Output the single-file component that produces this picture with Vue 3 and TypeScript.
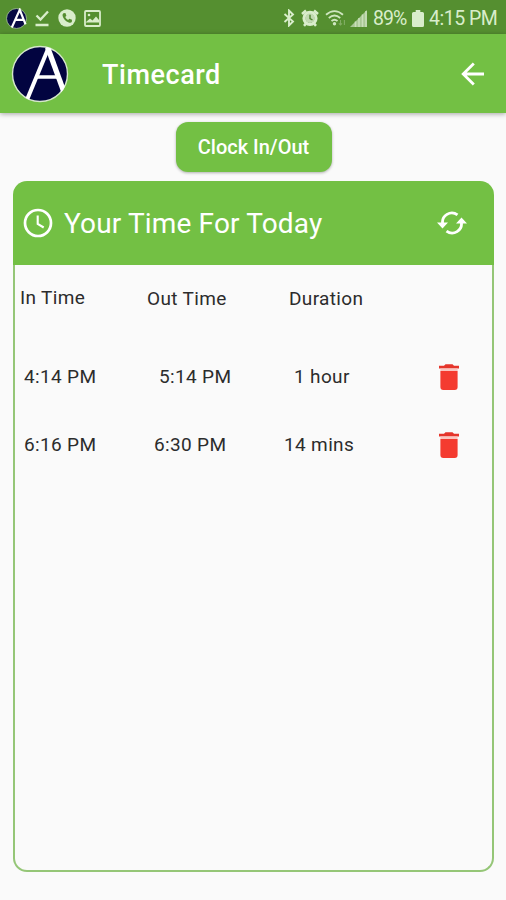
<script setup lang="ts">
interface Entry {
  id: string
  start: string
  end: string
  duration: string
}

const entries: Entry[] = [
  { id: 'first', start: '4:14 PM', end: '5:14 PM', duration: '1 hour' },
  { id: 'second', start: '6:16 PM', end: '6:30 PM', duration: '14 mins' },
]
</script>

<template>
  <div class="screen">
    <div class="status">
      <svg class="s-logo" viewBox="0 0 58 58">
        <circle cx="29" cy="29" r="27.5" fill="#070a43" stroke="#b9d3a8" stroke-width="2" />
        <path d="M16 54L38 5L54 45M25 33H49" fill="none" stroke="#fff" stroke-width="6" />
      </svg>
      <svg class="s-check" viewBox="0 0 16 18">
        <path d="M2.5 6.5L6.5 10.5L14 2.5M1.5 16H14.5" fill="none" stroke="#d9edcb" stroke-width="2.3" />
      </svg>
      <svg class="s-phone" viewBox="0 0 18 18">
        <circle cx="9" cy="9" r="8.7" fill="#d9edcb" />
        <path d="M5.4 4.2L7.4 4L8.4 6.8L7.2 7.9Q8.1 9.9 10.1 10.9L11.3 9.7L14 10.8L13.8 12.9Q12.7 14.1 10.8 13.4Q6 11.8 4.6 7Q4.2 5.2 5.4 4.2Z" fill="#558d30" />
      </svg>
      <svg class="s-photo" viewBox="0 0 17 17">
        <rect x="1" y="1" width="15" height="15" rx="1" fill="none" stroke="#d9edcb" stroke-width="1.8" />
        <path d="M2 12L6 8.5L8.5 10.5L12 6.5L15 10V12.5H2Z" fill="#d9edcb" />
        <circle cx="5" cy="5" r="1.3" fill="#d9edcb" />
      </svg>
      <span class="spacer"></span>
      <svg class="s-bt" viewBox="0 0 12 18">
        <path d="M1.5 5L10 12.5L6 16.5V1.5L10 5.5L1.5 13" fill="none" stroke="#d9edcb" stroke-width="1.9" />
      </svg>
      <svg class="s-alarm" viewBox="0 0 18 18">
        <circle cx="9" cy="9.3" r="6" fill="none" stroke="#d9edcb" stroke-width="3.2" />
        <path d="M1 5L5 1.6M17 5L13 1.6M3 16.8L5 14.5M15 16.8L13 14.5" stroke="#d9edcb" stroke-width="2.6" />
        <circle cx="9" cy="9.3" r="4.7" fill="#c2dab2" />
        <path d="M9 5.8V9.5L11.5 11" fill="none" stroke="#4d842c" stroke-width="1.4" />
      </svg>
      <svg class="s-wifi" viewBox="0 0 22 18">
        <path d="M1 5.7Q9.5 -1.5 18 5.7M3.8 9Q9.5 4 15.2 9M6.5 12Q9.5 9.4 12.5 12" fill="none" stroke="#cfe6c0" stroke-width="1.8" />
        <circle cx="9.5" cy="14.8" r="1.7" fill="#cfe6c0" />
        <path d="M15.5 11V16M13.8 14.3L15.5 16L17 14.3M19.4 16V11" fill="none" stroke="#82ad65" stroke-width="1.1" />
      </svg>
      <svg class="s-signal" viewBox="0 0 17 17">
        <path d="M0 17L17 0V17Z" fill="#a9c895" />
        <path d="M5.5 11.5V17M9 8V17M12.5 4.5V17M16 1V17" stroke="#c9dfba" stroke-width="1.5" />
      </svg>
      <span class="pct">89%</span>
      <svg class="s-bat" viewBox="0 0 12 17">
        <path d="M3.7 0H8.3V2H10.5Q12 2 12 3.5V15.5Q12 17 10.5 17H1.5Q0 17 0 15.5V3.5Q0 2 1.5 2H3.7Z" fill="#d9edcb" />
      </svg>
      <span class="clock">4:15 PM</span>
    </div>

    <header class="bar">
      <svg class="logo" viewBox="0 0 58 58">
        <defs><clipPath id="disc"><circle cx="29" cy="29" r="28" /></clipPath></defs>
        <circle cx="29" cy="29" r="27.5" fill="#020440" stroke="#d5e7cb" stroke-width="1.4" />
        <g clip-path="url(#disc)" fill="none" stroke="#fff">
          <path d="M15.5 56L37 4" stroke-width="4" />
          <path d="M36.5 2L53.3 48" stroke-width="5.2" />
          <path d="M25 32H47" stroke-width="3.4" />
        </g>
      </svg>
      <h1>Timecard</h1>
      <svg class="back" viewBox="0 0 24 24">
        <path d="M12.8 1.4L2.2 12L12.8 22.6M2.2 12H23" fill="none" stroke="#fff" stroke-width="2.8" />
      </svg>
    </header>

    <main>
      <button class="punch" type="button">Clock In/Out</button>
      <section class="card">
        <div class="head">
          <svg class="dial" viewBox="0 0 30 30">
            <circle cx="15" cy="15" r="13" fill="none" stroke="#fff" stroke-width="2.7" />
            <path d="M14.7 7.5V15.8L20.7 19.5" fill="none" stroke="#fff" stroke-width="2.1" />
          </svg>
          <h2>Your Time For Today</h2>
          <svg class="sync" viewBox="0 0 30 24">
            <path d="M5.7 13A9.3 9.3 0 0 1 20.5 3.9M24.3 11A9.3 9.3 0 0 1 9.5 20.1" fill="none" stroke="#fff" stroke-width="2.8" />
            <path d="M0 11.6H11L5.5 17.4ZM30 12.4H19L24.5 6.6Z" fill="#fff" />
          </svg>
        </div>
        <div class="sheet">
          <div class="row titles">
            <span class="in">In Time</span>
            <span class="out">Out Time</span>
            <span class="dur">Duration</span>
          </div>
          <div v-for="entry in entries" :key="entry.id" class="row" :class="entry.id">
            <span class="in">{{ entry.start }}</span>
            <span class="out">{{ entry.end }}</span>
            <span class="dur">{{ entry.duration }}</span>
            <svg class="trash" viewBox="0 0 20 26">
              <path d="M1.4 7H18.6V23Q18.6 26 15.6 26H4.4Q1.4 26 1.4 23Z" fill="#f43b30" />
              <path d="M0 1.8H5L6.5 0.3H13.5L15 1.8H20V4.5H0Z" fill="#e5352b" />
              <path d="M1.4 4.5H18.6V7H1.4Z" fill="#fbc5bf" />
            </svg>
          </div>
        </div>
      </section>
    </main>
  </div>
</template>

<style>
body {
  margin: 0;
  background: #fafafa;
}
</style>

<style scoped>
.screen {
  display: flex;
  flex-direction: column;
  box-sizing: border-box;
  width: 506px;
  height: 900px;
  background: #fafafa;
  color: #2c2c2c;
  font-family: Roboto, "Liberation Sans", sans-serif;
}
svg {
  display: block;
  flex: none;
}
.status {
  display: flex;
  align-items: center;
  box-sizing: border-box;
  height: 34px;
  padding: 2px 9px 0 6px;
  background: #558f30;
  color: #d9edcb;
  font-size: 19.5px;
  white-space: nowrap;
}
.spacer { flex: 1; }
.s-logo { width: 21px; height: 21px; }
.s-check { width: 16px; height: 18px; margin-left: 7px; }
.s-phone { width: 18px; height: 18px; margin-left: 8px; }
.s-photo { width: 17px; height: 17px; margin-left: 8px; }
.s-bt { width: 12px; height: 18px; }
.s-alarm { width: 18px; height: 18px; margin-left: 6px; }
.s-wifi { width: 22px; height: 18px; margin-left: 6px; }
.s-signal { width: 17px; height: 17px; margin-left: 3px; }
.pct { width: 34px; margin-left: 6px; letter-spacing: -1px; }
.s-bat { width: 12px; height: 17px; margin-left: 5px; }
.clock { width: 68px; margin-left: 5px; letter-spacing: -0.5px; }
.bar {
  display: flex;
  align-items: center;
  box-sizing: border-box;
  height: 79px;
  padding: 0 21px 0 11px;
  background: #73c044;
  box-shadow: 0 1px 5px rgba(0, 0, 0, 0.35);
}
.logo { width: 58px; height: 58px; }
h1 {
  flex: 1;
  margin: 3px 0 0 33px;
  color: #fff;
  font-size: 27px;
  font-weight: 500;
  letter-spacing: 0.55px;
  line-height: 32px;
}
.back { width: 24px; height: 24px; }
main {
  display: flex;
  flex: 1;
  flex-direction: column;
  align-items: center;
  padding: 9px 12px 28px 13px;
}
.punch {
  width: 156px;
  height: 50px;
  padding: 0;
  border: 0;
  border-radius: 12px;
  background: #73c044;
  box-shadow: 0 1px 3px rgba(0, 0, 0, 0.3);
  color: #fff;
  font: 500 20px/50px Roboto, "Liberation Sans", sans-serif;
}
.card {
  display: flex;
  flex: 1;
  flex-direction: column;
  width: 100%;
  margin-top: 9px;
}
.head {
  display: flex;
  align-items: center;
  box-sizing: border-box;
  height: 84px;
  padding: 0 27px 0 10px;
  border-radius: 14px 14px 0 0;
  background: #73c044;
}
.sheet {
  flex: 1;
  border: 2px solid #95c677;
  border-top: 0;
  border-radius: 0 0 14px 14px;
}
.dial { width: 30px; height: 30px; }
h2 {
  flex: 1;
  margin: 1px 0 0 11px;
  color: #fff;
  font-size: 28px;
  font-weight: 400;
  letter-spacing: 0.15px;
  line-height: 34px;
}
.sync { width: 30px; height: 24px; }
.row {
  display: grid;
  align-items: center;
  height: 68px;
  padding-left: 9px;
  font-size: 19px;
  letter-spacing: 0.35px;
  line-height: 24px;
  white-space: nowrap;
}
.titles {
  grid-template-columns: 127px 142px 100px;
  height: 78px;
  padding-left: 5px;
  align-items: start;
}
.titles span { margin-top: 22px; }
.titles .in { margin-top: 21px; }
.first { grid-template-columns: 135px 135px 145px 20px; }
.second { grid-template-columns: 130px 130px 155px 20px; }
.trash { width: 20px; height: 26px; }
</style>
